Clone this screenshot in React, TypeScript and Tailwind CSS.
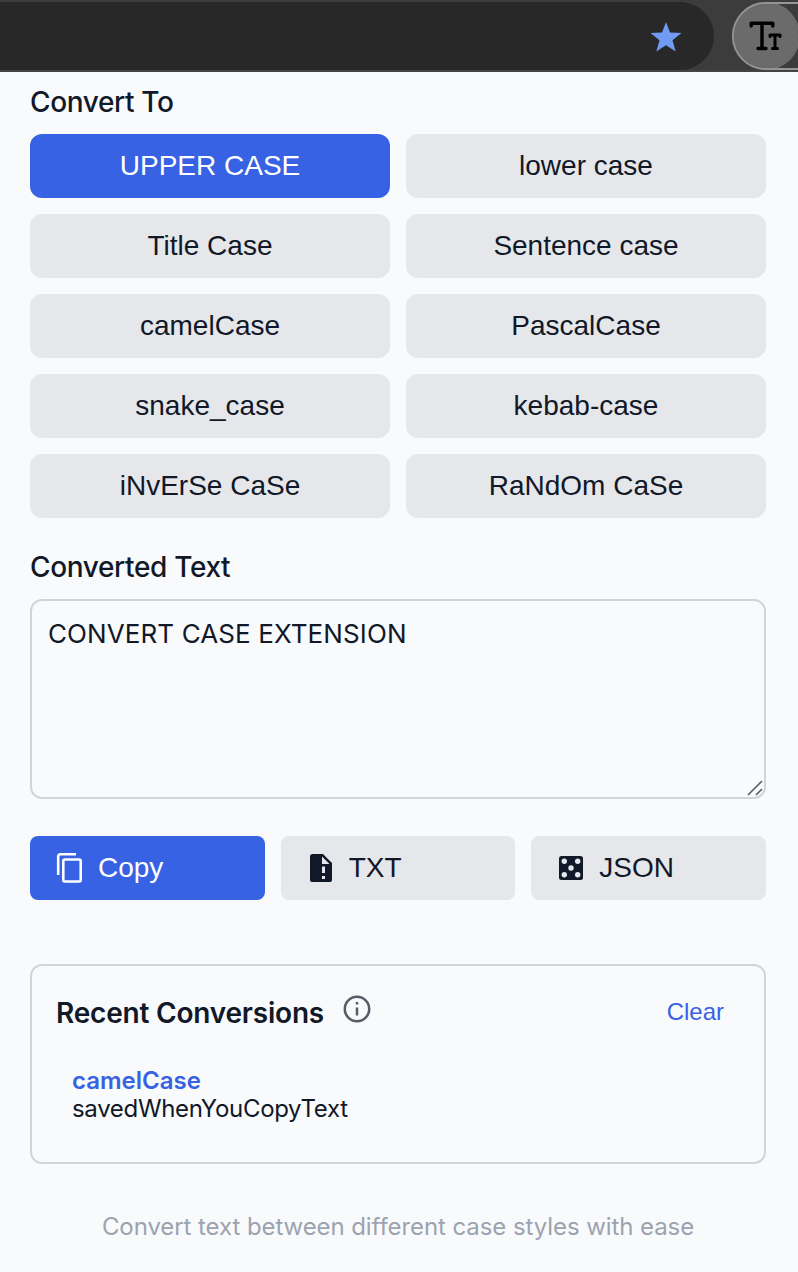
import React from "react";

const MODES = [
  "UPPER CASE",
  "lower case",
  "Title Case",
  "Sentence case",
  "camelCase",
  "PascalCase",
  "snake_case",
  "kebab-case",
  "iNvErSe CaSe",
  "RaNdOm CaSe",
];

function BrowserBar() {
  return (
    <div className="flex h-18 items-start justify-between overflow-hidden border-b-2 border-[#444444] bg-[#3c3c3c] pt-0.5">
      <div className="flex h-17 w-[714px] shrink-0 items-center justify-end rounded-r-full bg-[#282828] pr-[32px]">
        <svg width="32" height="30" viewBox="0 0 32 30" className="mt-0.5" fill="#6f9cf2">
          <path d="M16 0l4 10.6 11.5.5-9 7.2 3.2 11.2L16 23.3l-9.7 6.2 3.2-11.2-9-7.2 11.5-.5z" />
        </svg>
      </div>
      <div className="-mr-10 h-17 w-[106px] shrink-0 rounded-full border-2 border-[#969696]">
        <div className="-mt-0.5 -ml-0.5 flex h-17 w-17 items-center justify-center rounded-full border-2 border-[#8f8f8f]/60 bg-[#6b6b6b] bg-clip-padding">
          <svg width="34" height="30" viewBox="0 0 34 30" fill="none" stroke="#000" strokeLinecap="round" strokeLinejoin="round">
            <path d="M2.2 5V2.2H23.8V5M13 2.2V27.5M9 27.500H17" strokeWidth="3.400" />
            <path d="M21 15.500V14H31V15.500M26 14V27.500M23.500 27.500H28.500" strokeWidth="3" />
          </svg>
        </div>
      </div>
    </div>
  );
}

function CopyIcon() {
  return (
    <svg width="28" height="32" viewBox="0 0 28 32" fill="none" stroke="currentColor" strokeWidth="2.600">
      <path d="M2.200 23V4.300a2 2 0 0 1 2-2H20" />
      <rect x="7.300" y="7.500" width="17.400" height="22" rx="1.500" />
    </svg>
  );
}

function FileIcon() {
  return (
    <svg width="22" height="28" viewBox="0 0 22 28" fill="currentColor" fillRule="evenodd">
      <path d="M2.6 0H13l9 9v16.4a2.6 2.6 0 0 1-2.6 2.6H2.6A2.6 2.6 0 0 1 0 25.400V2.600A2.600 2.600 0 0 1 2.600 0zM12 2.500V10h7.500zM12 12.500v6.500h3v-6.500zM12 22v3h3v-3z" />
    </svg>
  );
}

function DiceIcon() {
  return (
    <svg width="24" height="24" viewBox="0 0 24 24" className="text-[#111827]">
      <rect width="24" height="24" rx="2.500" fill="currentColor" />
      <g fill="#e5e7eb">
        <circle cx="5.300" cy="5.300" r="2.700" />
        <circle cx="18.700" cy="5.300" r="2.700" />
        <circle cx="12" cy="12" r="2.700" />
        <circle cx="5.300" cy="18.700" r="2.700" />
        <circle cx="18.700" cy="18.700" r="2.700" />
      </g>
    </svg>
  );
}

function InfoIcon() {
  return (
    <svg width="28" height="28" viewBox="0 0 28 28" className="text-[#565b66]" fill="none" stroke="currentColor" strokeWidth="2.500">
      <circle cx="14" cy="14" r="12.200" />
      <path d="M14 7v2.600M14 12.500v8" />
    </svg>
  );
}

export default function App() {
  return (
    <div className="h-[1272px] w-[798px] overflow-hidden bg-[#f9fafc] font-['Inter',sans-serif] text-[#111827]">
      <BrowserBar />
      <main className="flex flex-col pr-8 pl-[30px]">
        <h2 className="mt-3 h-[50px] text-[28px] leading-9 font-medium tracking-[-0.350px]">Convert To</h2>
        <div className="grid grid-cols-2 gap-4 font-['Liberation_Sans',sans-serif] text-[28px]">
          {MODES.map((mode, i) => (
            <button
              key={mode}
              className={
                i === 0
                  ? "h-16 rounded-xl bg-[#3762e3] text-white"
                  : "h-16 rounded-xl bg-[#e5e7eb]"
              }
            >
              {mode}
            </button>
          ))}
        </div>
        <h2 className="mt-[31px] h-[50px] text-[28px] leading-9 font-medium tracking-[-0.350px]">Converted Text</h2>
        <div className="flex h-50 justify-between rounded-xl border-2 border-[#d1d5db] pl-4">
          <p className="mt-[17px] text-[26px] leading-8 tracking-[0.100px]">CONVERT CASE EXTENSION</p>
          <svg width="16" height="16" viewBox="0 0 16 16" className="mr-px mb-px self-end" stroke="#5f6063" strokeWidth="1.700">
            <path d="M1 15L15 1M9 15L15 9" />
          </svg>
        </div>
        <div className="mt-[37px] grid grid-cols-3 gap-4 font-['Liberation_Sans',sans-serif] text-[28px]">
          <button className="flex h-16 items-center rounded-lg bg-[#3762e3] pl-[26px] text-white">
            <CopyIcon />
            <span className="ml-3.5">Copy</span>
          </button>
          <button className="flex h-16 items-center rounded-lg bg-[#e5e7eb] pl-[29px]">
            <FileIcon />
            <span className="ml-[17px]">TXT</span>
          </button>
          <button className="flex h-16 items-center rounded-lg bg-[#e5e7eb] pl-7">
            <DiceIcon />
            <span className="ml-4">JSON</span>
          </button>
        </div>
        <section className="mt-16 h-50 rounded-xl border-2 border-[#d1d5db] pr-10 pl-6">
          <div className="flex items-start pt-[29px]">
            <h3 className="text-[28px] leading-9 font-semibold tracking-[-0.200px]">Recent Conversions</h3>
            <div className="ml-[19px]">
              <InfoIcon />
            </div>
            <button className="mt-px ml-auto font-['Liberation_Sans',sans-serif] text-2xl leading-8 text-[#3762e3]">Clear</button>
          </div>
          <div className="mt-9 pl-4 text-2xl leading-7">
            <p className="font-semibold text-[#3762e3]">camelCase</p>
            <p className="tracking-[-0.320px]">savedWhenYouCopyText</p>
          </div>
        </section>
        <p className="mt-12 text-center text-2xl leading-[30px] tracking-[-0.080px] text-[#9ca3af]">Convert text between different case styles with ease</p>
      </main>
    </div>
  );
}
